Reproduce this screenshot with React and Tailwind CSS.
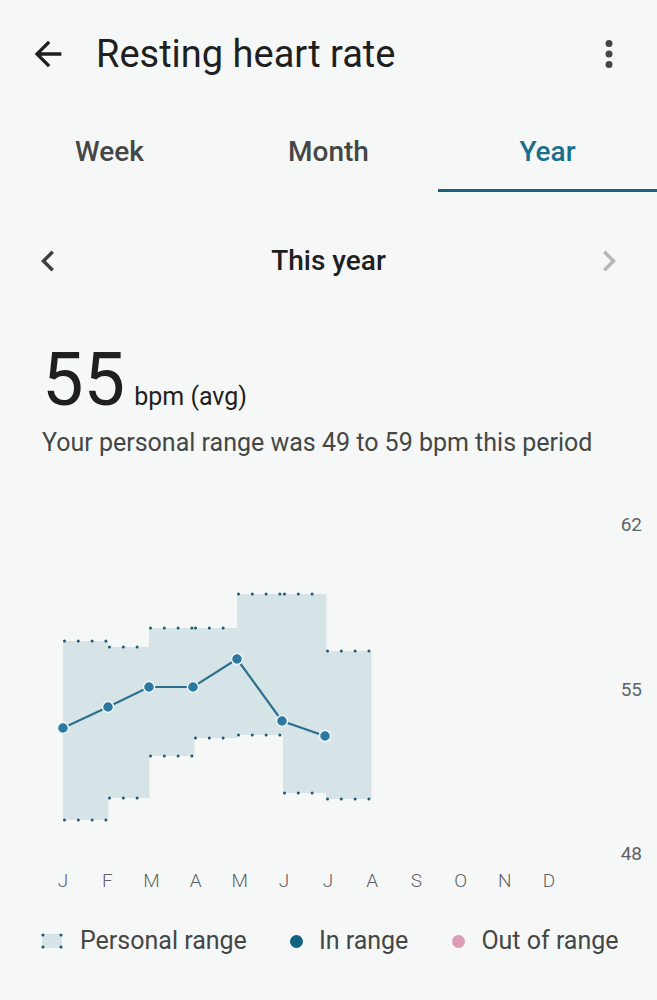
import React from 'react';

const STEPS = [
  { x0: 63, x1: 108, top: 641, bottom: 820 },
  { x0: 108, x1: 149, top: 647, bottom: 798 },
  { x0: 149, x1: 194, top: 628, bottom: 756 },
  { x0: 194, x1: 237, top: 628, bottom: 738 },
  { x0: 237, x1: 283, top: 594, bottom: 735 },
  { x0: 283, x1: 326, top: 594, bottom: 793 },
  { x0: 326, x1: 371, top: 651, bottom: 799 },
];

const POINTS = [
  [63, 728], [108, 707], [149, 687], [193, 687], [237, 659], [282, 721], [325, 736],
];

const MONTHS = ['J', 'F', 'M', 'A', 'M', 'J', 'J', 'A', 'S', 'O', 'N', 'D'];

function dotsFor(x0, x1) {
  const xs = [];
  for (let x = x0 + 1.5; x < x1 - 1.5; x += 13.8) xs.push(x);
  return xs;
}

function RangeChart() {
  const area =
    `M63 820 ` +
    STEPS.map(s => `L${s.x0} ${s.top} L${s.x1} ${s.top}`).join(' ') +
    ' ' +
    [...STEPS].reverse().map(s => `L${s.x1} ${s.bottom} L${s.x0} ${s.bottom}`).join(' ') +
    ' Z';

  return (
    <svg width="590" height="351" viewBox="0 514 590 351" className="shrink-0">
      {STEPS.map((s, i) => (
        <rect key={i} x={s.x0} y={s.top} width={s.x1 - s.x0 + 0.5} height={s.bottom - s.top} fill="#d6e4e8" />
      ))}
      {STEPS.map((s, i) =>
        dotsFor(s.x0, s.x1).map((x, j) => (
          <g key={`${i}-${j}`}>
            <circle cx={x} cy={s.top} r="1.5" fill="#1e5b72" />
            <circle cx={x} cy={s.bottom} r="1.5" fill="#1e5b72" />
          </g>
        ))
      )}
      <polyline
        points={POINTS.map(p => p.join(',')).join(' ')}
        fill="none"
        stroke="#2d6f8f"
        strokeWidth="2.2"
      />
      {POINTS.map(([x, y], i) => (
        <circle key={i} cx={x} cy={y} r="5.5" fill="#2b79a1" stroke="#eef5f7" strokeWidth="1.5" />
      ))}
      <path d={area} fill="none" stroke="none" />
    </svg>
  );
}

export default function App() {
  return (
    <div className="w-[657px] h-[1000px] overflow-hidden bg-[#f6f8f7] font-['Roboto',sans-serif] text-[#1f1f1f]">
      {/* top bar */}
      <div className="flex items-center h-[108px]">
        <button className="ml-[28px] w-[40px] h-[40px] flex items-center justify-center">
          <svg viewBox="0 0 24 24" className="w-[40px] h-[40px]" fill="#1f1f1f">
            <path d="M20 11H7.83l5.59-5.59L12 4l-8 8 8 8 1.41-1.41L7.83 13H20v-2z" />
          </svg>
        </button>
        <h1 className="ml-[28px] text-[38px] leading-none text-[#1f1f1f]">Resting heart rate</h1>
        <button className="ml-auto mr-[27px] w-[42px] h-[42px] flex items-center justify-center">
          <svg viewBox="0 0 24 24" className="w-[42px] h-[42px]" fill="#444746">
            <circle cx="12" cy="6" r="2" />
            <circle cx="12" cy="12" r="2" />
            <circle cx="12" cy="18" r="2" />
          </svg>
        </button>
      </div>

      {/* tabs */}
      <div className="grid grid-cols-3 h-[84px]">
        <div className="flex items-center justify-center pt-[6px] border-b-[3px] border-transparent text-[28px] font-medium text-[#444746]">Week</div>
        <div className="flex items-center justify-center pt-[6px] border-b-[3px] border-transparent text-[28px] font-medium text-[#444746]">Month</div>
        <div className="flex items-center justify-center pt-[6px] border-b-[3px] border-[#1a6280] text-[28px] font-medium text-[#1a6f8d]">Year</div>
      </div>

      {/* period */}
      <div className="flex items-center h-[60px] mt-[39px] pl-[27px] pr-[27px]">
        <svg viewBox="0 0 24 24" className="w-[42px] h-[42px]" fill="#3c4043">
          <path d="M15.41 7.41L14 6l-6 6 6 6 1.41-1.41L10.83 12z" />
        </svg>
        <div className="flex-1 text-center text-[28px] font-medium text-[#1f1f1f]">This year</div>
        <svg viewBox="0 0 24 24" className="w-[42px] h-[42px]" fill="#b4b7b6">
          <path d="M10 6L8.59 7.41 13.17 12l-4.58 4.59L10 18l6-6z" />
        </svg>
      </div>

      {/* summary */}
      <div className="mt-[52px] pl-[42px]">
        <div className="flex items-baseline">
          <span className="text-[74px] leading-none text-[#1f1f1f]">55</span>
          <span className="ml-[9px] text-[25px] leading-none text-[#1f1f1f]">bpm (avg)</span>
        </div>
        <p className="mt-[11px] text-[25px] leading-[30px] text-[#444746]">
          Your personal range was 49 to 59 bpm this period
        </p>
      </div>

      {/* chart */}
      <div className="flex mt-[56px] h-[351px]">
        <RangeChart />
        <div className="flex-1 flex flex-col justify-between items-end pr-[15px] text-[19px] leading-[22px] text-[#5f6368]">
          <span>62</span>
          <span>55</span>
          <span>48</span>
        </div>
      </div>

      <div className="grid grid-cols-12 w-[530px] ml-[41px] mt-[5px] text-[19px] leading-[22px] font-light text-[#5f6368]">
        {MONTHS.map((m, i) => (
          <span key={i} className="text-center">{m}</span>
        ))}
      </div>

      {/* legend */}
      <div className="flex items-center h-[30px] mt-[34px] text-[25px] text-[#444746]">
        <svg width="20" height="14" viewBox="0 0 20 14" className="ml-[42px] overflow-visible">
          <rect x="0" y="0" width="20" height="14" fill="#d6e4e8" />
          <circle cx="1" cy="1" r="1.6" fill="#1e5b72" />
          <circle cx="19" cy="1" r="1.6" fill="#1e5b72" />
          <circle cx="1" cy="13" r="1.6" fill="#1e5b72" />
          <circle cx="19" cy="13" r="1.6" fill="#1e5b72" />
        </svg>
        <span className="ml-[18px]">Personal range</span>
        <span className="ml-[43px] w-[13px] h-[13px] rounded-full bg-[#0f6282]" />
        <span className="ml-[16px]">In range</span>
        <span className="ml-[44px] w-[13px] h-[13px] rounded-full bg-[#dd9bb6]" />
        <span className="ml-[16px]">Out of range</span>
      </div>
    </div>
  );
}
